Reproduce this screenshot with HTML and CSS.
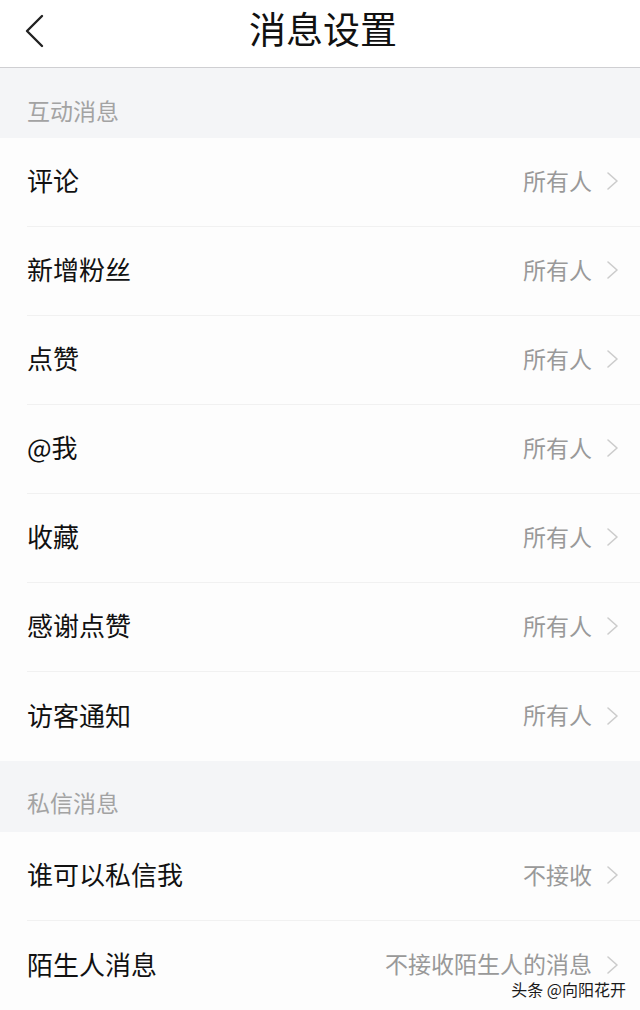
FILE: index.html
```html
<!DOCTYPE html>
<html>

<head>
    <title>消息设置</title>
    <link rel="stylesheet" href="styles.css">
</head>

<body>
    <div class="topBar">
        <svg class="backIcon" width="24" height="36" viewBox="0 0 24 36">
            <polyline points="19,3 4,18 19,33" fill="none" stroke="#222" stroke-width="2.4" stroke-linecap="round" stroke-linejoin="round" />
        </svg>
        <h1 class="topBarTitle">消息设置</h1>
    </div>

    <div class="sectionHeader">互动消息</div>
    <div class="settingList">
        <div class="settingRow"><span class="settingName">评论</span><span class="settingValue">所有人</span><svg class="arrow" width="14" height="20" viewBox="0 0 14 20"><polyline points="2,2 11,10 2,18" /></svg></div>
        <div class="settingRow"><span class="settingName">新增粉丝</span><span class="settingValue">所有人</span><svg class="arrow" width="14" height="20" viewBox="0 0 14 20"><polyline points="2,2 11,10 2,18" /></svg></div>
        <div class="settingRow"><span class="settingName">点赞</span><span class="settingValue">所有人</span><svg class="arrow" width="14" height="20" viewBox="0 0 14 20"><polyline points="2,2 11,10 2,18" /></svg></div>
        <div class="settingRow"><span class="settingName">@我</span><span class="settingValue">所有人</span><svg class="arrow" width="14" height="20" viewBox="0 0 14 20"><polyline points="2,2 11,10 2,18" /></svg></div>
        <div class="settingRow"><span class="settingName">收藏</span><span class="settingValue">所有人</span><svg class="arrow" width="14" height="20" viewBox="0 0 14 20"><polyline points="2,2 11,10 2,18" /></svg></div>
        <div class="settingRow"><span class="settingName">感谢点赞</span><span class="settingValue">所有人</span><svg class="arrow" width="14" height="20" viewBox="0 0 14 20"><polyline points="2,2 11,10 2,18" /></svg></div>
        <div class="settingRow"><span class="settingName">访客通知</span><span class="settingValue">所有人</span><svg class="arrow" width="14" height="20" viewBox="0 0 14 20"><polyline points="2,2 11,10 2,18" /></svg></div>
    </div>

    <div class="sectionHeader">私信消息</div>
    <div class="settingList">
        <div class="settingRow"><span class="settingName">谁可以私信我</span><span class="settingValue">不接收</span><svg class="arrow" width="14" height="20" viewBox="0 0 14 20"><polyline points="2,2 11,10 2,18" /></svg></div>
        <div class="settingRow"><span class="settingName">陌生人消息</span><span class="settingValue">不接收陌生人的消息</span><svg class="arrow" width="14" height="20" viewBox="0 0 14 20"><polyline points="2,2 11,10 2,18" /></svg></div>
    </div>

    <div class="watermark">头条 @向阳花开</div>
</body>

</html>
```

FILE: styles.css
```css
body {
    margin: 0;
    height: 1010px;
    overflow: hidden;
    position: relative;
    font-family: "Noto Sans CJK SC", "Noto Sans", sans-serif;
    background-color: #fdfdfd;
    color: #111;
}

.topBar {
    display: flex;
    align-items: center;
    justify-content: center;
    position: relative;
    height: 68px;
    padding-bottom: 10px;
    box-sizing: border-box;
    border-bottom: 1px solid #cfcfd2;
    background-color: #fff;
}

.backIcon {
    position: absolute;
    left: 23px;
    top: 13px;
}

.topBarTitle {
    margin: 0;
    margin-left: 6px;
    font-size: 37px;
    font-weight: 400;
    line-height: 1;
    color: #111;
}

.sectionHeader {
    display: flex;
    align-items: flex-end;
    height: 70px;
    padding: 0 27px 16px;
    box-sizing: border-box;
    background-color: #f4f5f7;
    font-size: 23px;
    line-height: 1;
    color: #a3a3a3;
}

.sectionHeader + .settingList + .sectionHeader {
    height: 71px;
    padding-bottom: 18px;
}

.settingList {
    padding-left: 27px;
    background-color: #fdfdfd;
}

.settingRow {
    display: flex;
    align-items: center;
    height: 89px;
    padding-right: 20px;
    padding-bottom: 4px;
    box-sizing: border-box;
    border-bottom: 1px solid #f1f1f1;
}

.settingRow:last-child {
    border-bottom: none;
}

.settingName {
    flex: 1;
    font-size: 26px;
    line-height: 1;
}

.settingValue {
    font-size: 23px;
    line-height: 1;
    color: #999;
}

.arrow {
    margin-left: 14px;
    margin-top: 2px;
    fill: none;
    stroke: #cccccc;
    stroke-width: 1.6;
    stroke-linecap: round;
    stroke-linejoin: round;
}

.watermark {
    position: absolute;
    right: 14px;
    bottom: 13px;
    font-size: 16px;
    line-height: 1;
    color: #1a1a1a;
    text-shadow: 0 0 2px #fff, 0 0 2px #fff;
}
```
